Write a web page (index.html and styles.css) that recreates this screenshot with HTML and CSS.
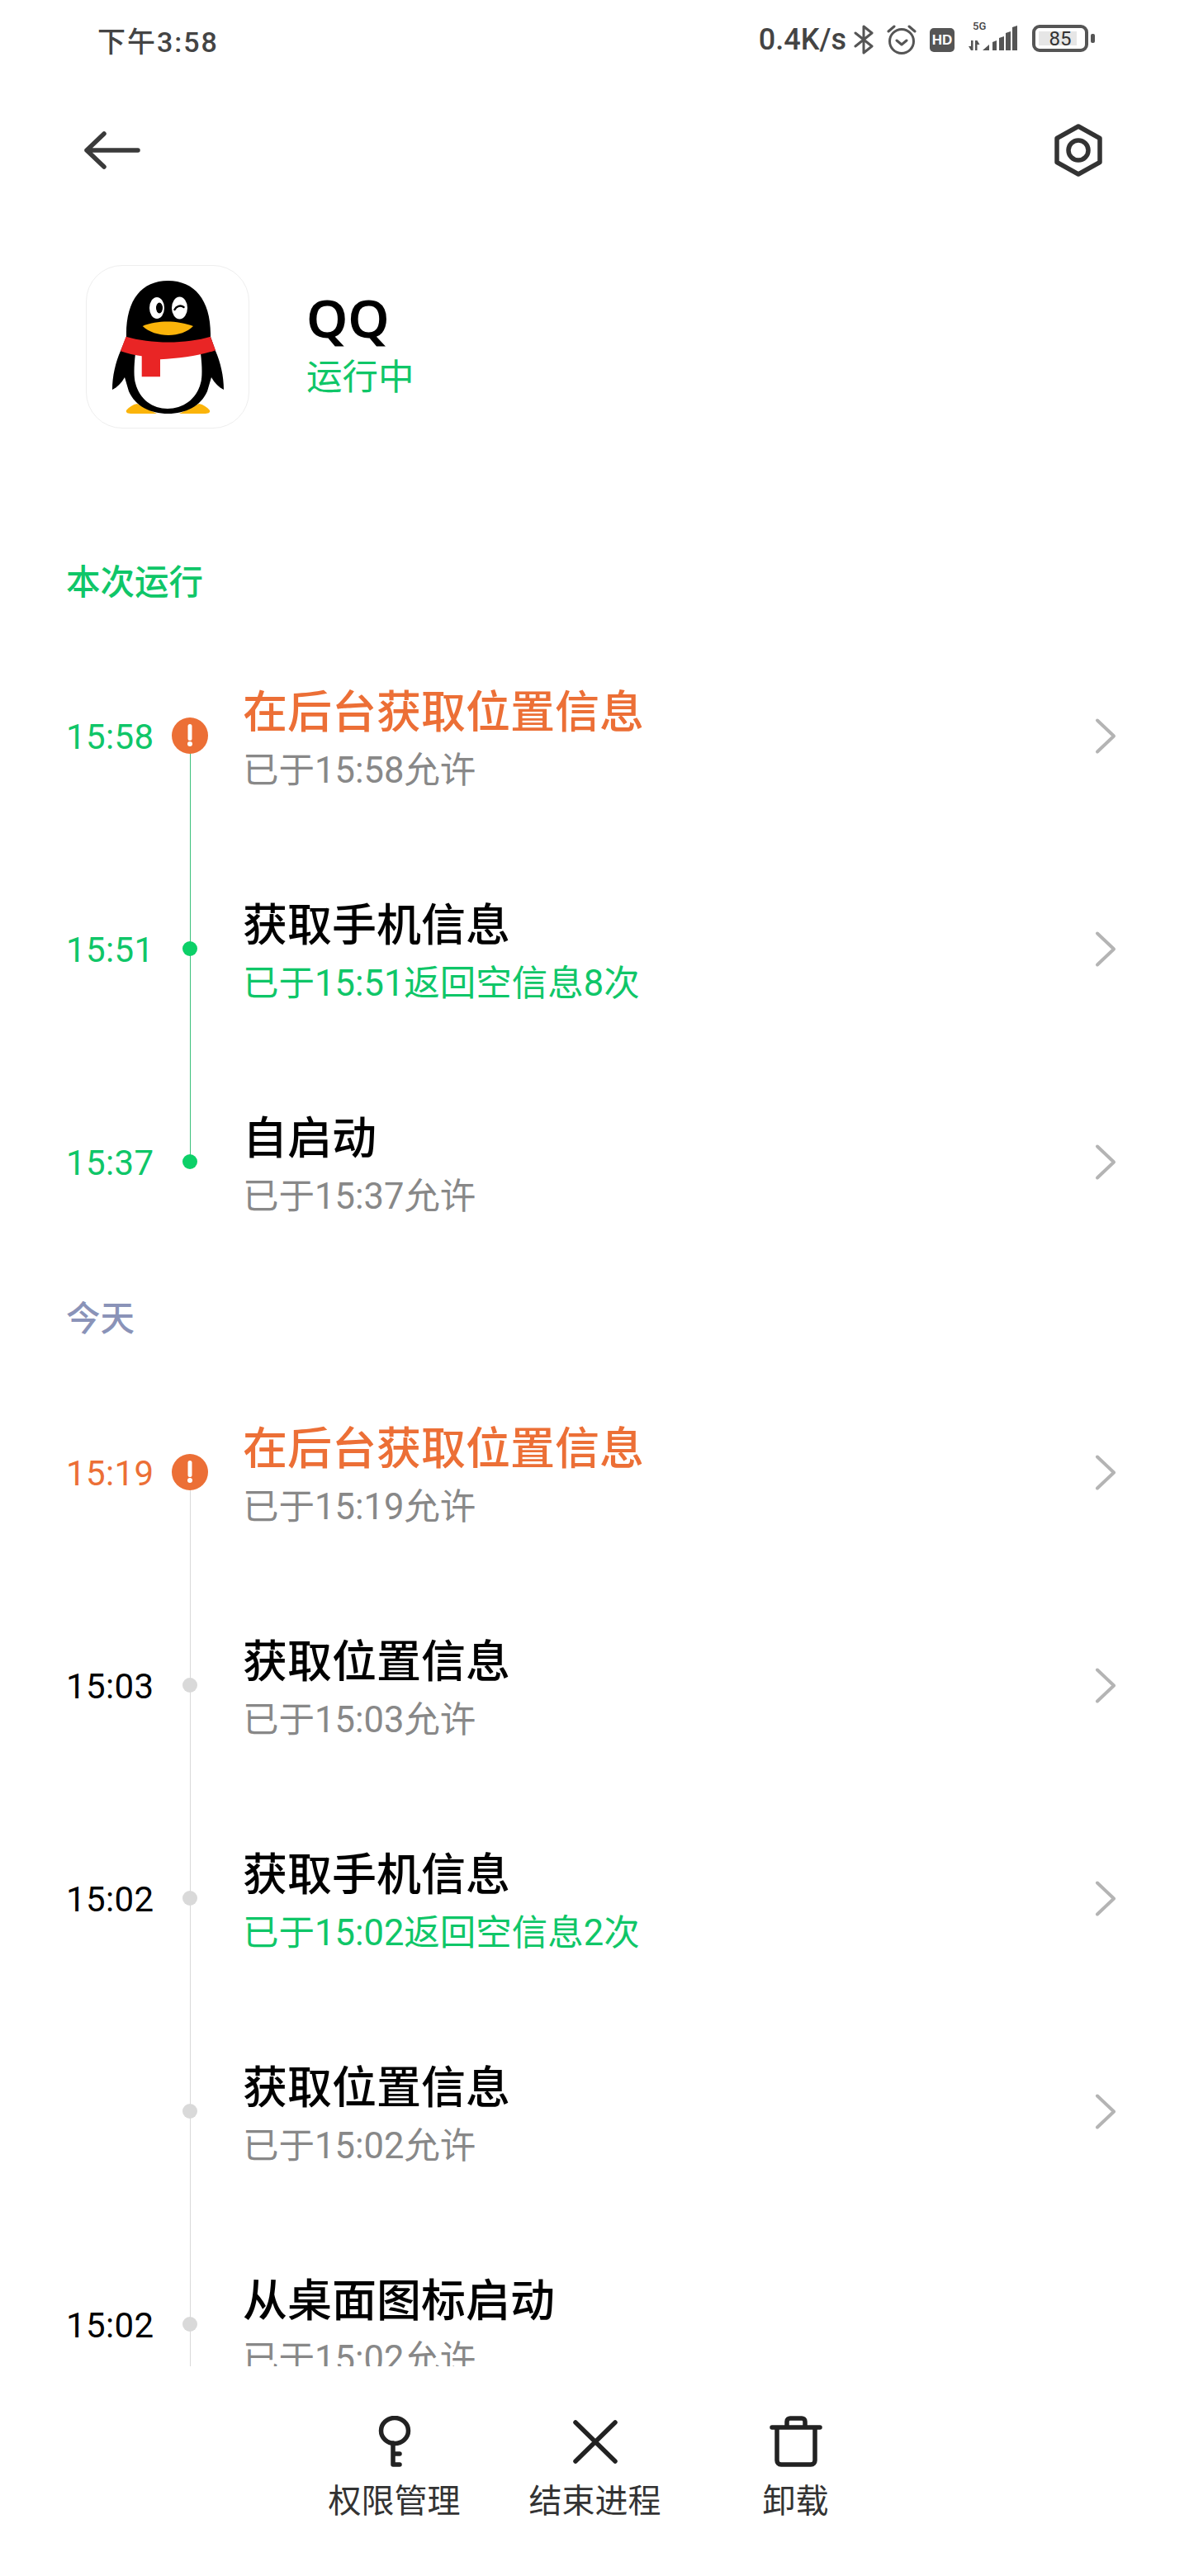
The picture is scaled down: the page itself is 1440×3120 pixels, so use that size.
FILE: index.html
```html
<!DOCTYPE html>
<html lang="zh-CN">
<head>
    <meta charset="UTF-8">
    <meta name="viewport" content="width=device-width, initial-scale=1.0">
    <title>QQ</title>
    <link rel="stylesheet" href="styles.css">
</head>
<body>
    <div class="page">
        <!-- status bar -->
        <div class="status">
            <span class="clock">下午3:58</span>
            <div class="status-right">
                <span class="speed">0.4K/s</span>
                <svg class="st-bt" width="24" height="36" viewBox="0 0 24 36" fill="none" stroke="#555" stroke-width="3" stroke-linejoin="round" stroke-linecap="round"><path d="M2 10l20 16-10 8V2l10 8L2 26"/></svg>
                <svg class="st-alarm" width="36" height="36" viewBox="0 0 36 36" fill="none" stroke="#555" stroke-width="3" stroke-linecap="round" stroke-linejoin="round"><circle cx="18" cy="20" r="14.5"/><path d="M12 19l6 5 6-5M2 8l7-6M34 8l-7-6"/></svg>
                <span class="st-hd">HD</span>
                <div class="st-signal">
                    <span class="st-5g">5G</span>
                    <svg width="62" height="31" viewBox="0 0 62 31" fill="#555"><path d="M4 18h2.500v12H4l-3-5h3zM9 18h2.500l3 5h-3v7H9z"/><path d="M18 30l8-7v7zM30 20l5-2v12h-5zM38 15l6-2v17h-6zM46 9l6-2v23h-6zM54 2l6-2v30h-6z"/></svg>
                </div>
                <div class="st-battery"><span>85</span></div>
                <div class="st-nub"></div>
            </div>
        </div>

        <!-- nav -->
        <div class="nav">
            <svg width="68" height="46" viewBox="0 0 68 46" fill="none" stroke="#3a3a3a" stroke-width="5.500" stroke-linecap="round" stroke-linejoin="round"><path d="M65 23H3M24 3L3 23l21 20"/></svg>
            <svg width="60" height="64" viewBox="0 0 60 64" fill="none" stroke="#333" stroke-width="5.500" stroke-linejoin="round"><path d="M30 3l26 14.500v29L30 61 4 46.500v-29z"/><circle cx="30" cy="32" r="12"/></svg>
        </div>

        <!-- app -->
        <div class="app">
            <div class="app-icon">
                <svg width="197" height="197" viewBox="0 0 197 197">
                    <path d="M48 175c3-4 8-7 13-8l24 12H55c-5 0-8-1-7-4zM149 175c-3-4-8-7-13-8l-24 12h30c5 0 8-1 7-4z" fill="#fbb40a"/>
                    <path d="M48 86C47 42 66 18 98.500 18S151 42 150 86l6 17c6 14 10 30 10 47-6-3-11-8-15-15l-5 17c-8 18-26 27-47.500 27S59 170 51 152l-5-17c-4 7-9 12-15 15 0-17 4-33 10-47z" fill="#000"/>
                    <path d="M59 106h79c2 16 2 30 0 36-5 20-22 31-40 31s-34-11-39-31c-2-6-2-20 0-36z" fill="#fff"/>
                    <path d="M47.500 85.700c30 9 73 9 102.500 0l6 16.500c-20 7-44 10-67 11v21H66.700v-25c-9-1-17-3-25.700-6z" fill="#e92525"/>
                    <ellipse cx="85" cy="51" rx="9" ry="13" fill="#fff"/>
                    <ellipse cx="112.500" cy="51" rx="9.500" ry="13.500" fill="#fff"/>
                    <ellipse cx="88" cy="51" rx="4" ry="6.500" fill="#000"/>
                    <path d="M106.500 53c2-4 7-6 11-3" fill="none" stroke="#000" stroke-width="2.500" stroke-linecap="round"/>
                    <path d="M67.700 73c9-4 20-5.500 30-5.500s22 2 31.300 5.500c-7 7-18 11-30 11s-24-4-31.300-11z" fill="#fbb40a"/>
                </svg>
            </div>
            <div class="app-info">
                <div class="app-name">QQ</div>
                <div class="app-state">运行中</div>
            </div>
        </div>

        <!-- timeline -->
        <div class="scroll">
            <div class="section-label green">本次运行</div>
            <div class="list active">
                <div class="row alert-row">
                    <span class="time green">15:58</span>
                    <div class="node">
                        <svg class="dot-alert" width="44" height="44" viewBox="0 0 44 44"><circle cx="22" cy="22" r="22" fill="#ec6f36"/><rect x="19.500" y="8" width="5" height="20" rx="2.500" fill="#fff"/><circle cx="22" cy="32" r="3" fill="#fff"/></svg>
                    </div>
                    <div class="info">
                        <div class="title orange">在后台获取位置信息</div>
                        <div class="sub">已于15:58允许</div>
                    </div>
                    <svg class="chev" width="30" height="50" viewBox="0 0 30 50" fill="none" stroke="#b4b4b4" stroke-width="4" stroke-linecap="round" stroke-linejoin="round"><path d="M7 6.500l20 19-20 19"/></svg>
                </div>
                <div class="row">
                    <span class="time green">15:51</span>
                    <div class="node"><span class="dot"></span></div>
                    <div class="info">
                        <div class="title">获取手机信息</div>
                        <div class="sub green">已于15:51返回空信息8次</div>
                    </div>
                    <svg class="chev" width="30" height="50" viewBox="0 0 30 50" fill="none" stroke="#b4b4b4" stroke-width="4" stroke-linecap="round" stroke-linejoin="round"><path d="M7 6.500l20 19-20 19"/></svg>
                </div>
                <div class="row">
                    <span class="time green">15:37</span>
                    <div class="node"><span class="dot"></span></div>
                    <div class="info">
                        <div class="title">自启动</div>
                        <div class="sub">已于15:37允许</div>
                    </div>
                    <svg class="chev" width="30" height="50" viewBox="0 0 30 50" fill="none" stroke="#b4b4b4" stroke-width="4" stroke-linecap="round" stroke-linejoin="round"><path d="M7 6.500l20 19-20 19"/></svg>
                </div>
            </div>

            <div class="section-label today">今天</div>
            <div class="list">
                <div class="row alert-row">
                    <span class="time orange">15:19</span>
                    <div class="node">
                        <svg class="dot-alert" width="44" height="44" viewBox="0 0 44 44"><circle cx="22" cy="22" r="22" fill="#ec6f36"/><rect x="19.500" y="8" width="5" height="20" rx="2.500" fill="#fff"/><circle cx="22" cy="32" r="3" fill="#fff"/></svg>
                    </div>
                    <div class="info">
                        <div class="title orange">在后台获取位置信息</div>
                        <div class="sub">已于15:19允许</div>
                    </div>
                    <svg class="chev" width="30" height="50" viewBox="0 0 30 50" fill="none" stroke="#b4b4b4" stroke-width="4" stroke-linecap="round" stroke-linejoin="round"><path d="M7 6.500l20 19-20 19"/></svg>
                </div>
                <div class="row">
                    <span class="time">15:03</span>
                    <div class="node"><span class="dot"></span></div>
                    <div class="info">
                        <div class="title">获取位置信息</div>
                        <div class="sub">已于15:03允许</div>
                    </div>
                    <svg class="chev" width="30" height="50" viewBox="0 0 30 50" fill="none" stroke="#b4b4b4" stroke-width="4" stroke-linecap="round" stroke-linejoin="round"><path d="M7 6.500l20 19-20 19"/></svg>
                </div>
                <div class="row">
                    <span class="time">15:02</span>
                    <div class="node"><span class="dot"></span></div>
                    <div class="info">
                        <div class="title">获取手机信息</div>
                        <div class="sub green">已于15:02返回空信息2次</div>
                    </div>
                    <svg class="chev" width="30" height="50" viewBox="0 0 30 50" fill="none" stroke="#b4b4b4" stroke-width="4" stroke-linecap="round" stroke-linejoin="round"><path d="M7 6.500l20 19-20 19"/></svg>
                </div>
                <div class="row">
                    <span class="time"></span>
                    <div class="node"><span class="dot"></span></div>
                    <div class="info">
                        <div class="title">获取位置信息</div>
                        <div class="sub">已于15:02允许</div>
                    </div>
                    <svg class="chev" width="30" height="50" viewBox="0 0 30 50" fill="none" stroke="#b4b4b4" stroke-width="4" stroke-linecap="round" stroke-linejoin="round"><path d="M7 6.500l20 19-20 19"/></svg>
                </div>
                <div class="row more">
                    <span class="time">15:02</span>
                    <div class="node"><span class="dot"></span></div>
                    <div class="info">
                        <div class="title">从桌面图标启动</div>
                        <div class="sub">已于15:02允许</div>
                    </div>
                </div>
            </div>
        </div>

        <!-- bottom actions -->
        <div class="actions">
            <div class="action">
                <svg width="64" height="62" viewBox="0 0 64 62" fill="none" stroke="#222" stroke-width="5.500" stroke-linecap="round" stroke-linejoin="round"><ellipse cx="32" cy="18" rx="16.500" ry="15.500"/><path d="M30 33v26h8M30 46h8"/></svg>
                <span>权限管理</span>
            </div>
            <div class="action">
                <svg width="64" height="62" viewBox="0 0 64 62" fill="none" stroke="#222" stroke-width="5.500" stroke-linecap="round"><path d="M8 8l48 47M56 8L8 55"/></svg>
                <span>结束进程</span>
            </div>
            <div class="action">
                <svg width="64" height="62" viewBox="0 0 64 62" fill="none" stroke="#222" stroke-width="5.500" stroke-linecap="round" stroke-linejoin="round"><path d="M3 14h58M9 14v40c0 3 2 5 5 5h36c3 0 5-2 5-5V14M21 14V7c0-3 2-4 4-4h14c2 0 4 1 4 4v7"/></svg>
                <span>卸载</span>
            </div>
        </div>
    </div>
</body>
</html>
```

FILE: styles.css
```css
* {
    box-sizing: border-box;
}
body {
    margin: 0;
    background-color: #fff;
    font-family: Roboto, 'Noto Sans CJK SC', sans-serif;
    color: #000;
}
.page {
    width: 1440px;
    height: 3120px;
    display: flex;
    flex-direction: column;
    overflow: hidden;
}

/* status bar */
.status {
    height: 96px;
    padding: 0 114px 0 118px;
    display: flex;
    align-items: center;
    justify-content: space-between;
    color: #444;
}
.clock {
    font-size: 34px;
    font-weight: 500;
    letter-spacing: 2px;
}
.status-right {
    display: flex;
    align-items: center;
}
.speed {
    font-size: 36px;
    font-weight: 500;
    color: #444;
}
.st-bt {
    margin-left: 9px;
}
.st-alarm {
    margin-left: 16px;
}
.st-hd {
    margin-left: 16px;
    width: 30px;
    height: 29px;
    background-color: #555;
    border-radius: 5px;
    color: #fff;
    font-size: 17px;
    font-weight: 900;
    line-height: 29px;
    text-align: center;
    font-family: 'Liberation Sans', sans-serif;
}
.st-signal {
    position: relative;
    margin: -3px 0 0 16px;
}
.st-signal svg {
    display: block;
}
.st-5g {
    position: absolute;
    left: 6px;
    top: -6px;
    font-size: 13px;
    line-height: 14px;
    font-weight: 500;
    color: #444;
}
.st-battery {
    margin: -3px 0 0 16px;
    width: 68px;
    height: 33px;
    border: 4px solid #555;
    border-radius: 9px;
    background: linear-gradient(#e6e6e6, #e6e6e6) no-repeat 4px 4px / 46px 17px;
    display: flex;
    align-items: center;
    justify-content: center;
}
.st-battery span {
    font-size: 24px;
    color: #333;
}
.st-nub {
    margin: -3px 0 0 3px;
    width: 5px;
    height: 11px;
    background-color: #555;
    border-radius: 2px;
}

/* nav */
.nav {
    height: 172px;
    padding: 0 104px 0 102px;
    display: flex;
    align-items: center;
    justify-content: space-between;
}

/* app */
.app {
    height: 406px;
    padding: 53px 0 0 104px;
    display: flex;
    align-items: flex-start;
}
.app-icon {
    width: 198px;
    height: 198px;
    border: 1px solid #eee;
    border-radius: 44px;
    overflow: hidden;
}
.app-icon svg {
    display: block;
}
.app-info {
    margin: 31px 0 0 69px;
}
.app-name {
    font-family: 'Noto Sans', sans-serif;
    font-size: 64px;
    font-weight: 600;
    line-height: 66px;
}
.app-state {
    margin-top: 10px;
    font-size: 43.5px;
    line-height: 60px;
    color: #0fc668;
}

/* timeline */
.scroll {
    height: 2192px;
    overflow: hidden;
}
.section-label {
    margin-left: 80px;
    padding-top: 2px;
    font-size: 41.5px;
    line-height: 60px;
    font-weight: 500;
}
.section-label.today {
    margin-top: 30px;
    color: #8a93b8;
}
.list {
    margin-top: 26px;
}
.row {
    height: 258px;
    padding-left: 80px;
    padding-right: 88px;
    display: grid;
    grid-template-columns: 120px 60px 1fr 30px;
    align-items: center;
}
.time {
    padding-top: 3px;
    font-size: 42px;
    line-height: 60px;
    letter-spacing: 0.4px;
}
.node {
    position: relative;
    align-self: stretch;
    display: flex;
    align-items: center;
    justify-content: center;
}
.node::after {
    content: "";
    position: absolute;
    left: 30px;
    top: 50%;
    width: 1px;
    height: 100%;
    background-color: #d9d9d9;
}
.row:last-child:not(.more) .node::after {
    display: none;
}
.active .node::after {
    background-color: #3cc07c;
}
.dot {
    position: relative;
    z-index: 1;
    width: 18px;
    height: 18px;
    border-radius: 50%;
    background-color: #d9d9d9;
}
.active .dot {
    background-color: #0cd068;
}
.dot-alert {
    position: relative;
    z-index: 1;
}
.info {
    padding: 15px 0 0 34px;
}
.title {
    font-size: 54px;
    font-weight: 500;
    line-height: 70px;
}
.sub {
    font-size: 43.5px;
    line-height: 70px;
    color: #888;
}
.green {
    color: #0fc668;
}
.orange {
    color: #ec6f36;
}

/* bottom actions */
.actions {
    flex: 1;
    padding: 60px 0 0 1px;
    display: flex;
    justify-content: center;
}
.action {
    width: 243px;
    display: flex;
    flex-direction: column;
    align-items: center;
}
.action span {
    margin-top: 14px;
    font-size: 40px;
    line-height: 56px;
    color: #333;
}
```
